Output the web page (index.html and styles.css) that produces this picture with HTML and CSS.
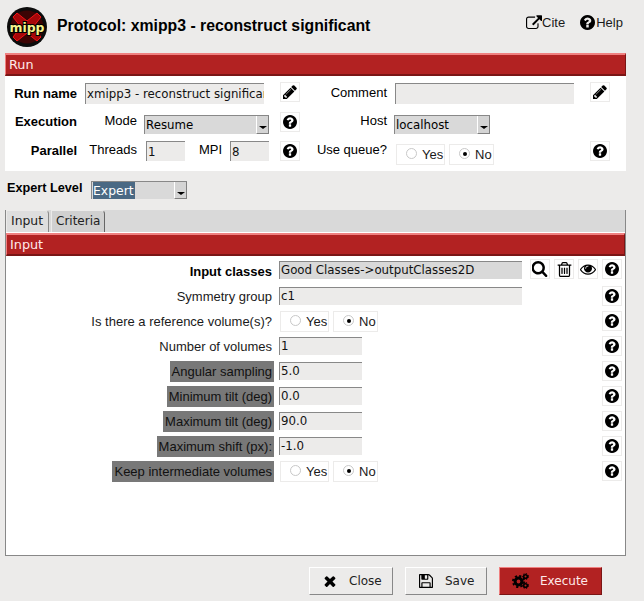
FILE: index.html
```html
<!DOCTYPE html>
<html>
	<head>
		<meta charset="utf-8">
		<title>Protocol: xmipp3 - reconstruct significant</title>
		<link rel="stylesheet" href="styles.css">
	</head>
	<body>
		<svg class="defs" width="0" height="0">
			<symbol id="i-help" viewBox="128 128 1536 1536"><path d="M1024 1376v-192q0-14-9-23t-23-9h-192q-14 0-23 9t-9 23v192q0 14 9 23t23 9h192q14 0 23-9t9-23zm256-672q0-88-55.5-163t-138.5-116-170-41q-243 0-371 213-15 24 8 42l132 100q7 6 19 6 16 0 25-12 53-68 86-92 34-24 86-24 48 0 85.5 26t37.5 59q0 38-20 61t-68 45q-63 28-115.5 86.5t-52.5 125.5v36q0 14 9 23t23 9h192q14 0 23-9t9-23q0-19 21.5-49.5t54.5-49.5q32-18 49-28.5t46-35 44.5-48 28-60.5 12.5-81zm384 192q0 209-103 385.5t-279.5 279.5-385.5 103-385.5-103-279.5-279.5-103-385.5 103-385.5 279.5-279.5 385.5-103 385.5 103 279.5 279.5 103 385.5z"/></symbol>
			<symbol id="i-pencil" viewBox="0 128 1536 1536"><path d="M363 1536l91-91-235-235-91 91v107h128v128h107zm523-928q0-22-22-22-10 0-17 7l-542 542q-7 7-7 17 0 22 22 22 10 0 17-7l542-542q7-7 7-17zm-54-192l416 416-832 832h-416v-416zm683 96q0 53-37 90l-166 166-416-416 166-165q36-38 90-38 53 0 91 38l235 234q37 39 37 91z"/></symbol>
			<symbol id="i-search" viewBox="128 128 1664 1664"><path d="M1216 832q0-185-131.5-316.5t-316.5-131.5-316.5 131.5-131.5 316.5 131.5 316.5 316.5 131.5 316.5-131.5 131.5-316.5zm512 832q0 52-38 90t-90 38q-54 0-90-38l-343-342q-179 124-399 124-143 0-273.5-55.5t-225-150-150-225-55.5-273.5 55.5-273.5 150-225 225-150 273.5-55.5 273.5 55.5 225 150 150 225 55.5 273.5q0 220-124 399l343 343q37 37 37 90z"/></symbol>
			<symbol id="i-trash" viewBox="128 128 1536 1536"><path d="M704 736v576q0 14-9 23t-23 9h-64q-14 0-23-9t-9-23v-576q0-14 9-23t23-9h64q14 0 23 9t9 23zm256 0v576q0 14-9 23t-23 9h-64q-14 0-23-9t-9-23v-576q0-14 9-23t23-9h64q14 0 23 9t9 23zm256 0v576q0 14-9 23t-23 9h-64q-14 0-23-9t-9-23v-576q0-14 9-23t23-9h64q14 0 23 9t9 23zm128 724v-948h-896v948q0 22 7 40.5t14.5 27 10.5 8.5h832q3 0 10.5-8.5t14.5-27 7-40.5zm-672-1076h448l-48-117q-7-9-17-11h-317q-10 2-17 11zm928 32v64q0 14-9 23t-23 9h-96v948q0 83-47 143.5t-113 60.5h-832q-66 0-113-58.5t-47-141.5v-952h-96q-14 0-23-9t-9-23v-64q0-14 9-23t23-9h309l70-167q15-37 54-63t79-26h320q40 0 79 26t54 63l70 167h309q14 0 23 9t9 23z"/></symbol>
			<symbol id="i-eye" viewBox="0 128 1792 1536"><path d="M1664 960q-152-236-381-353 61 104 61 225 0 185-131.5 316.5t-316.5 131.5-316.5-131.5-131.5-316.5q0-121 61-225-229 117-381 353 133 205 333.5 326.5t434.5 121.5 434.5-121.5 333.5-326.5zm-720-384q0-20-14-34t-34-14q-125 0-214.5 89.5t-89.5 214.5q0 20 14 34t34 14 34-14 14-34q0-86 61-147t147-61q20 0 34-14t14-34zm848 384q0 34-20 69-140 230-376.5 368.5t-499.5 138.5-499.5-139-376.5-368q-20-35-20-69t20-69q140-229 376.5-368t499.5-139 499.5 139 376.5 368q20 35 20 69z"/></symbol>
			<symbol id="i-close" viewBox="128 128 1536 1536"><path d="M1490 1322q0 40-28 68l-136 136q-28 28-68 28t-68-28l-294-294-294 294q-28 28-68 28t-68-28l-136-136q-28-28-28-68t28-68l294-294-294-294q-28-28-28-68t28-68l136-136q28-28 68-28t68 28l294 294 294-294q28-28 68-28t68 28l136 136q28 28 28 68t-28 68l-294 294 294 294q28 28 28 68z"/></symbol>
			<symbol id="i-save" viewBox="128 128 1536 1536"><path d="M512 1536h768v-384h-768v384zm896 0h128v-896q0-14-10-38.5t-20-34.5l-281-281q-10-10-34-20t-39-10v416q0 40-28 68t-68 28h-576q-40 0-68-28t-28-68v-416h-128v1280h128v-416q0-40 28-68t68-28h832q40 0 68 28t28 68v416zm-384-928v-320q0-13-9.5-22.5t-22.5-9.5h-192q-13 0-22.5 9.5t-9.5 22.5v320q0 13 9.5 22.5t22.5 9.5h192q13 0 22.5-9.5t9.5-22.5zm640 32v928q0 40-28 68t-68 28h-1344q-40 0-68-28t-28-68v-1344q0-40 28-68t68-28h928q40 0 88 20t76 48l280 280q28 28 48 76t20 88z"/></symbol>
			<symbol id="i-link" viewBox="0 128 1792 1536"><path d="M1408 928v320q0 119-84.5 203.5t-203.5 84.5h-832q-119 0-203.5-84.5t-84.5-203.5v-832q0-119 84.5-203.5t203.5-84.5h704q14 0 23 9t9 23v64q0 14-9 23t-23 9h-704q-66 0-113 47t-47 113v832q0 66 47 113t113 47h832q66 0 113-47t47-113v-320q0-14 9-23t23-9h64q14 0 23 9t9 23zm384-864v512q0 26-19 45t-45 19-45-19l-176-176-652 652q-10 10-23 10t-23-10l-114-114q-10-10-10-23t10-23l652-652-176-176q-19-19-19-45t19-45 45-19h512q26 0 45 19t19 45z" transform="translate(0 96)"/></symbol>
		</svg>

		<div class="header">
			<svg class="logo" viewBox="0 0 40 40" width="40" height="40">
				<circle cx="20" cy="20" r="20" fill="#0c0c0c"/>
				<circle cx="20" cy="20" r="16.5" fill="#3c0404"/>
				<path d="M6 10 L10 6 L20 14 L30 6 L34 10 L26 20 L34 30 L30 34 L20 26 L10 34 L6 30 L14 20 Z" fill="#a50709" stroke="#f01416" stroke-width="1"/>
				<text x="20" y="25" class="logo-text" text-anchor="middle" textLength="35" lengthAdjust="spacingAndGlyphs">mipp</text>
			</svg>
			<div class="title">Protocol: xmipp3 - reconstruct significant</div>
			<a class="top-link cite"><svg class="ico"><use href="#i-link"/></svg>Cite</a>
			<a class="top-link help-link"><svg class="ico"><use href="#i-help"/></svg>Help</a>
		</div>

		<div class="bar run-bar">Run</div>
		<div class="run-body">
			<div class="run-row row-name">
				<span class="lbl lbl-main bold">Run name</span>
				<span class="entry entry-name">xmipp3 - reconstruct significar</span>
				<span class="btn btn-first"><svg class="ico"><use href="#i-pencil"/></svg></span>
				<span class="lbl lbl-side">Comment</span>
				<span class="entry entry-name"></span>
				<span class="btn btn-last"><svg class="ico"><use href="#i-pencil"/></svg></span>
			</div>
			<div class="run-row row-exec">
				<span class="lbl lbl-main bold">Execution</span>
				<span class="lbl lbl-sub">Mode</span>
				<span class="select select-mode">Resume<i class="arrow"></i></span>
				<span class="btn btn-mid"><svg class="ico"><use href="#i-help"/></svg></span>
				<span class="lbl lbl-side">Host</span>
				<span class="select select-host">localhost<i class="arrow"></i></span>
			</div>
			<div class="run-row row-par">
				<span class="lbl lbl-main bold">Parallel</span>
				<span class="lbl lbl-sub">Threads</span>
				<span class="entry entry-num first-num">1</span>
				<span class="lbl lbl-mpi">MPI</span>
				<span class="entry entry-num">8</span>
				<span class="btn btn-mid"><svg class="ico"><use href="#i-help"/></svg></span>
				<span class="lbl lbl-side">Use queue?</span>
				<span class="radio radio-queue"><i class="dot"></i>Yes</span>
				<span class="radio radio-no"><i class="dot on"></i>No</span>
				<span class="btn btn-far"><svg class="ico"><use href="#i-help"/></svg></span>
			</div>
		</div>

		<div class="expert">
			<span class="bold expert-lbl">Expert Level</span>
			<span class="select select-expert"><b class="selected">Expert</b><i class="arrow"></i></span>
		</div>

		<div class="notebook">
			<div class="tabs">
				<span class="tab tab-on">Input</span>
				<span class="tab tab-off">Criteria</span>
			</div>
			<div class="bar">Input</div>
			<div class="form">
				<div class="row row-top">
					<span class="name bold">Input classes</span>
					<span class="entry entry-long dark">Good Classes-&gt;outputClasses2D</span>
					<span class="btn btn-tool"><svg class="ico ico-search"><use href="#i-search"/></svg></span>
					<span class="btn btn-tool"><svg class="ico ico-trash"><use href="#i-trash"/></svg></span>
					<span class="btn btn-tool"><svg class="ico ico-eye"><use href="#i-eye"/></svg></span>
					<span class="btn btn-tool"><svg class="ico"><use href="#i-help"/></svg></span>
				</div>
				<div class="row">
					<span class="name">Symmetry group</span>
					<span class="entry entry-long">c1</span>
					<span class="btn push"><svg class="ico"><use href="#i-help"/></svg></span>
				</div>
				<div class="row">
					<span class="name">Is there a reference volume(s)?</span>
					<span class="radio radio-first"><i class="dot"></i>Yes</span>
					<span class="radio radio-no"><i class="dot on"></i>No</span>
					<span class="btn push"><svg class="ico"><use href="#i-help"/></svg></span>
				</div>
				<div class="row">
					<span class="name">Number of volumes</span>
					<span class="entry entry-short">1</span>
					<span class="btn push"><svg class="ico"><use href="#i-help"/></svg></span>
				</div>
				<div class="row">
					<span class="name"><em class="expert-mark">Angular sampling</em></span>
					<span class="entry entry-short">5.0</span>
					<span class="btn push"><svg class="ico"><use href="#i-help"/></svg></span>
				</div>
				<div class="row">
					<span class="name"><em class="expert-mark">Minimum tilt (deg)</em></span>
					<span class="entry entry-short">0.0</span>
					<span class="btn push"><svg class="ico"><use href="#i-help"/></svg></span>
				</div>
				<div class="row">
					<span class="name"><em class="expert-mark">Maximum tilt (deg)</em></span>
					<span class="entry entry-short">90.0</span>
					<span class="btn push"><svg class="ico"><use href="#i-help"/></svg></span>
				</div>
				<div class="row">
					<span class="name"><em class="expert-mark">Maximum shift (px):</em></span>
					<span class="entry entry-short">-1.0</span>
					<span class="btn push"><svg class="ico"><use href="#i-help"/></svg></span>
				</div>
				<div class="row">
					<span class="name"><em class="expert-mark">Keep intermediate volumes</em></span>
					<span class="radio radio-first"><i class="dot"></i>Yes</span>
					<span class="radio radio-no"><i class="dot on"></i>No</span>
					<span class="btn push"><svg class="ico"><use href="#i-help"/></svg></span>
				</div>
			</div>
		</div>

		<div class="footer">
			<span class="action action-close"><svg class="ico"><use href="#i-close"/></svg>Close</span>
			<span class="action action-save"><svg class="ico"><use href="#i-save"/></svg>Save</span>
			<span class="action action-run">
				<svg class="cogs" viewBox="0 0 17 16" width="17" height="16">
					<circle cx="6.5" cy="8.5" r="3.4" fill="none" stroke="#000" stroke-width="3"/>
					<circle cx="6.5" cy="8.5" r="5.6" fill="none" stroke="#000" stroke-width="1.8" stroke-dasharray="2.2 2.2"/>
					<circle cx="13.5" cy="3.5" r="1.8" fill="none" stroke="#000" stroke-width="1.6"/>
					<circle cx="13.5" cy="3.5" r="3" fill="none" stroke="#000" stroke-width="1" stroke-dasharray="1.4 1.4"/>
					<circle cx="13.5" cy="12.5" r="1.8" fill="none" stroke="#000" stroke-width="1.6"/>
					<circle cx="13.5" cy="12.5" r="3" fill="none" stroke="#000" stroke-width="1" stroke-dasharray="1.4 1.4"/>
				</svg>Execute</span>
		</div>
	</body>
</html>
```

FILE: styles.css
```css
html, body {
	margin: 0;
	padding: 0;
	width: 644px;
	height: 601px;
	overflow: hidden;
	background-color: #ecebea;
	color: #000000;
	font-family: "Liberation Sans", Arial, sans-serif;
	font-size: 13px;
}
.defs {
	position: absolute;
}
.bold {
	font-weight: bold;
}
.ico {
	width: 14px;
	height: 14px;
	fill: #000000;
	flex: none;
}
.ico-search {
	width: 16px;
	height: 16px;
}
.ico-trash {
	width: 15px;
	height: 15px;
}
.ico-eye {
	width: 16px;
	height: 14px;
}

/* header */
.header {
	display: flex;
	align-items: center;
	height: 53px;
	padding-left: 7px;
	box-sizing: border-box;
}
.logo {
	flex: none;
}
.logo-text {
	font-family: "DejaVu Sans", sans-serif;
	font-size: 13px;
	font-weight: bold;
	fill: #f4f28c;
	stroke: #000000;
	stroke-width: 2.2px;
	paint-order: stroke;
}
.title {
	margin-left: 10px;
	width: 469px;
	font-size: 15.8px;
	font-weight: bold;
	margin-top: -2px;
}
.top-link {
	display: flex;
	align-items: center;
	font-size: 13px;
	margin-top: -8px;
	color: #1a1a1a;
}
.top-link .ico {
	width: 16px;
	height: 15px;
}
.help-link .ico {
	width: 15px;
	margin-right: 1px;
}
.cite {
	margin-right: 15px;
}

/* red section bars */
.bar {
	box-sizing: border-box;
	height: 23px;
	line-height: 19px;
	padding-left: 3px;
	background-color: #b22222;
	border-top: 2px solid #f08080;
	border-left: 1px solid #f08080;
	border-right: 1px solid #7a1515;
	border-bottom: 2px solid #7a1515;
	color: #ffe9e9;
	font-family: "DejaVu Sans", sans-serif;
	font-size: 12.8px;
}
.run-bar {
	margin-left: 5px;
	width: 621px;
}

/* run panel */
.run-body {
	margin-left: 5px;
	width: 621px;
	height: 95px;
	background-color: #ffffff;
	box-sizing: border-box;
	padding-top: 6px;
}
.run-row {
	display: flex;
	align-items: flex-start;
	height: 22px;
}
.row-exec {
	margin-top: 8px;
}
.row-par {
	margin-top: 7px;
}
.lbl {
	flex: none;
	line-height: 20px;
	text-align: right;
}
.row-name .lbl-main {
	margin-top: 2px;
}
.row-name .lbl-side {
	margin-top: 1px;
}
.row-exec .lbl-sub,
.row-exec .lbl-side,
.row-par .lbl-sub,
.row-par .lbl-mpi,
.row-par .lbl-side {
	margin-top: -1px;
}
.lbl-main {
	width: 72px;
}
.lbl-sub {
	width: 60px;
}
.lbl-mpi {
	width: 37px;
}
.lbl-side {
	width: 80px;
}
.entry {
	box-sizing: border-box;
	display: block;
	flex: none;
	height: 21px;
	line-height: 20px;
	padding-left: 1px;
	background-color: #ecebea;
	border-top: 1px solid #888888;
	border-left: 1px solid #888888;
	overflow: hidden;
	white-space: nowrap;
	font-family: "DejaVu Sans", sans-serif;
	font-size: 11.8px;
	color: #111111;
}
.entry-name {
	width: 179px;
	margin-left: 8px;
	margin-top: 1px;
}
.entry-num {
	width: 39px;
	height: 20px;
	margin-left: 8px;
}
.first-num {
	margin-left: 9px;
}
.select {
	box-sizing: border-box;
	position: relative;
	display: block;
	flex: none;
	height: 19px;
	line-height: 18px;
	padding-left: 1px;
	background-color: #d9d9d9;
	border-top: 1px solid #888888;
	border-left: 1px solid #888888;
	font-family: "DejaVu Sans", sans-serif;
	font-size: 11.8px;
}
.select-mode {
	width: 125px;
	margin-left: 7px;
	margin-top: 3px;
}
.select-host {
	width: 96px;
	margin-left: 7px;
	margin-top: 3px;
}
.select-expert {
	width: 96px;
	height: 18px;
	margin-left: 8px;
	color: #ffffff;
}
.selected {
	display: inline-block;
	height: 17px;
	padding-right: 1px;
	font-weight: normal;
	font-size: 12.4px;
	background-color: #4a6984;
}
.arrow {
	position: absolute;
	right: 0;
	top: 0;
	bottom: 0;
	width: 13px;
	box-sizing: border-box;
	background-color: #d4d4d4;
	border-left: 1px solid #ffffff;
	border-right: 1px solid #808080;
	border-bottom: 1px solid #808080;
}
.arrow::after {
	content: "";
	position: absolute;
	left: 2px;
	top: 10px;
	border-left: 4px solid transparent;
	border-right: 4px solid transparent;
	border-top: 3px solid #000000;
}
.btn {
	box-sizing: border-box;
	display: flex;
	flex: none;
	align-items: center;
	justify-content: center;
	width: 20px;
	height: 20px;
	background-color: #ffffff;
	border: 1px solid #ecebea;
}
.btn-first {
	margin-left: 16px;
	margin-right: 7px;
}
.btn-mid {
	margin-left: 11px;
	margin-right: 7px;
}
.btn-last {
	margin-left: 16px;
}
.btn-far {
	margin-left: 96px;
}
.radio {
	box-sizing: border-box;
	display: flex;
	flex: none;
	align-items: center;
	height: 21px;
	background-color: #ffffff;
	border: 1px solid #ecebea;
	color: #1a1a1a;
}
.radio-queue {
	width: 49px;
	margin-left: 9px;
	margin-top: 3px;
	padding-left: 9px;
}
.radio-first {
	width: 49px;
	margin-left: 6px;
	padding-left: 9px;
}
.radio-no {
	width: 45px;
	margin-left: 4px;
	padding-left: 9px;
}
.row-par .radio-no {
	margin-top: 3px;
}
.dot {
	position: relative;
	box-sizing: border-box;
	display: block;
	width: 11px;
	height: 11px;
	margin-right: 5px;
	margin-top: -2px;
	background-color: #ffffff;
	border: 1px solid #c8c8c8;
	border-radius: 50%;
}
.dot.on::after {
	content: "";
	position: absolute;
	left: 2.5px;
	top: 2.5px;
	width: 4px;
	height: 4px;
	background-color: #000000;
	border-radius: 50%;
}

/* expert level */
.expert {
	display: flex;
	align-items: flex-start;
	height: 18px;
	margin-top: 10px;
	padding-left: 7px;
}
.expert-lbl {
	width: 76px;
	font-size: 12.7px;
	line-height: 14px;
	white-space: nowrap;
}

/* notebook */
.notebook {
	box-sizing: border-box;
	margin-top: 11px;
	margin-left: 5px;
	width: 621px;
	height: 346px;
	background-color: #ffffff;
	border-left: 1px solid #888888;
	border-right: 1px solid #888888;
	border-bottom: 1px solid #888888;
}
.tabs {
	display: flex;
	align-items: flex-end;
	box-sizing: border-box;
	height: 23px;
	background-color: #d9d9d9;
	border-bottom: 1px solid #ffffff;
}
.tab {
	box-sizing: border-box;
	height: 22px;
	line-height: 20px;
	padding-left: 4px;
	margin-right: 2px;
	background-color: #d0d0d0;
	border-top: 1px solid #ecebea;
	border-left: 1px solid #ecebea;
	border-right: 1px solid #666666;
	border-top-right-radius: 4px;
	font-family: "DejaVu Sans", sans-serif;
	font-size: 12.4px;
	color: #222222;
}
.tab-on {
	width: 43px;
	background-color: #dedede;
	border-right-color: #888888;
}
.tab-off {
	width: 54px;
	font-size: 12px;
}
.form {
	padding-top: 3px;
}
.row {
	display: flex;
	align-items: flex-start;
	height: 25px;
}
.row-top {
	height: 27px;
}
.name {
	box-sizing: border-box;
	width: 268px;
	flex: none;
	padding-right: 2px;
	line-height: 21px;
	text-align: right;
	color: #1a1a1a;
}
.row-top .name {
	margin-top: 2px;
	color: #000000;
}
.expert-mark {
	display: inline-block;
	height: 21px;
	line-height: 21px;
	margin-right: -2px;
	padding: 0 2px;
	font-style: normal;
	background-color: #787878;
	color: #111111;
}
.row .entry {
	height: 18px;
	line-height: 17px;
	margin-top: 1px;
	margin-left: 5px;
}
.row-top .entry {
	margin-top: 2px;
}
.entry-long {
	width: 243px;
}
.entry-short {
	width: 83px;
}
.dark {
	background-color: #d9d9d9;
}
.btn-tool {
	margin-left: 4px;
}
.row .entry + .btn-tool {
	margin-left: 8px;
}
.push {
	margin-left: auto;
	margin-right: 3px;
}

/* bottom buttons */
.footer {
	display: flex;
	margin-top: 11px;
	padding-left: 309px;
}
.action {
	box-sizing: border-box;
	display: flex;
	align-items: center;
	height: 28px;
	background-color: #ecebea;
	border-top: 1px solid #ffffff;
	border-left: 1px solid #ffffff;
	border-right: 1px solid #888888;
	border-bottom: 1px solid #888888;
	font-family: "DejaVu Sans", sans-serif;
	font-size: 12px;
	color: #222222;
}
.action .ico {
	margin-right: 12px;
}
.action-close {
	width: 84px;
	padding-left: 13px;
	margin-right: 12px;
}
.action-save {
	width: 82px;
	padding-left: 13px;
	margin-right: 12px;
}
.action-run {
	width: 103px;
	padding-left: 12px;
	background-color: #b22222;
	color: #ffe9e9;
	border-top-color: #f08080;
	border-left-color: #f08080;
	border-right-color: #7a1515;
	border-bottom-color: #7a1515;
}
.cogs {
	margin-right: 11px;
	flex: none;
}
```
